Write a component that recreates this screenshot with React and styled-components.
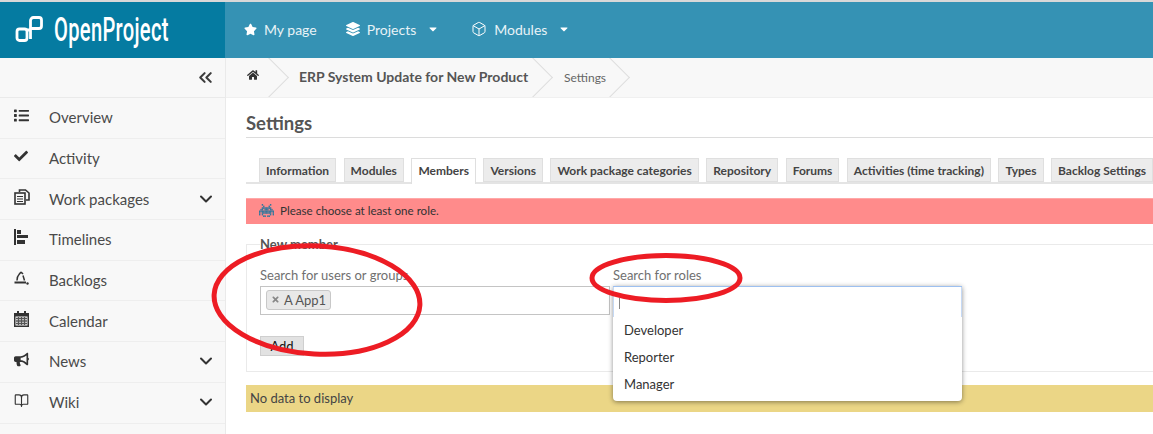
import React from 'react'
import styled, { createGlobalStyle } from 'styled-components'
import { FaStar, FaLayerGroup, FaHome, FaList, FaCheck, FaBullhorn, FaCaretDown, FaTimes } from 'react-icons/fa'
import { ChevronDown, ChevronsLeft, Box, BookOpen } from 'lucide-react'

const GlobalStyle = createGlobalStyle`
  html, body {
    margin: 0;
    height: 100%;
    overflow: hidden;
    background: #fff;
    font-family: Lato, "Noto Sans", sans-serif;
    color: #4a4a4a;
  }
`

const Page = styled.div`
  position: relative;
  width: 1153px;
  height: 434px;
  overflow: hidden;
  padding-top: 2px;
  box-sizing: border-box;
  background: #fff;
  box-shadow: inset 0 2px 0 #d8d8d8;
`
const Header = styled.header`
  display: flex;
  height: 56px;
`
const LogoArea = styled.div`
  width: 225px;
  flex: none;
  background: #057ba1;
  display: flex;
  align-items: center;
  padding: 0 0 2px 15px;
  box-sizing: border-box;
  color: #fff;
  overflow: hidden;
  svg { flex: none; }
`
const LogoText = styled.span`
  font-family: Roboto, sans-serif;
  font-weight: 500;
  font-size: 33px;
  line-height: 1;
  margin-left: 11px;
  flex: none;
  transform: scaleX(0.61);
  transform-origin: left center;
  letter-spacing: 0.5px;
  white-space: nowrap;
`
const Nav = styled.nav`
  flex: 1;
  background: #3592b4;
  display: flex;
  align-items: center;
  padding: 0 0 2px 19px;
  color: #e8f3f7;
  font-size: 14px;
`
const NavItem = styled.div`
  display: flex;
  align-items: center;
  gap: 7px;
  margin-right: ${p => p.$gap}px;
  svg { color: #fff; flex: none; }
`
const Caret = styled(FaCaretDown)`
  margin-left: 4px;
`
const Body = styled.div`
  display: flex;
  height: 376px;
`
const Sidebar = styled.aside`
  width: 226px;
  flex: none;
  background: #f8f8f8;
  border-right: 1px solid #eaeaea;
  box-sizing: border-box;
  overflow: hidden;
`
const Collapse = styled.div`
  height: 40px;
  display: flex;
  align-items: center;
  justify-content: flex-end;
  padding-right: 9px;
  border-bottom: 1px solid #eaeaea;
  box-sizing: border-box;
  color: #3c3c3c;
`
const MenuRow = styled.div`
  height: 40.7px;
  display: flex;
  align-items: center;
  border-bottom: 1px solid #eeeeee;
  box-sizing: border-box;
  padding: 0 9px 1px 14px;
  font-size: 15px;
  color: #4a4a4a;
`
const MenuIcon = styled.span`
  width: 35px;
  flex: none;
  display: flex;
  color: #333;
  margin-top: -4px;
`
const MenuLabel = styled.span`
  flex: 1;
`
const Main = styled.main`
  flex: 1;
  min-width: 0;
`
const Breadcrumb = styled.div`
  height: 40px;
  background: #f8f8f8;
  display: flex;
  align-items: center;
  overflow: hidden;
  border-bottom: 1px solid #f0f0f0;
  box-sizing: border-box;
`
const Crumb = styled.div`
  position: relative;
  height: 100%;
  display: flex;
  align-items: center;
  box-sizing: border-box;
  padding-left: ${p => p.$left}px;
  padding-bottom: ${p => (p.$strong ? 2 : 0)}px;
  width: ${p => p.$width}px;
  flex: none;
  font-size: ${p => (p.$strong ? 14 : 12)}px;
  font-weight: ${p => (p.$strong ? 700 : 400)};
  color: ${p => (p.$strong ? '#555' : '#666')};
  white-space: nowrap;
  &::after {
    content: '';
    position: absolute;
    right: 1px;
    top: 5px;
    width: 28px;
    height: 28px;
    border-top: 1px solid #dedede;
    border-right: 1px solid #dedede;
    transform: rotate(45deg);
  }
`
const HomeIcon = styled(FaHome)`
  margin-top: -5px;
  color: #333;
`
const Content = styled.div`
  padding-left: 20px;
`
const Title = styled.h2`
  margin: 0;
  height: 39px;
  line-height: 50px;
  font-size: 18.5px;
  font-weight: 700;
  color: #555;
  border-bottom: 1px solid #dcdcdc;
`
const Tabs = styled.div`
  display: flex;
  height: 24px;
  margin-top: 20px;
  padding-left: 13px;
  gap: 7.5px;
  border-bottom: 2px solid #e4e4e4;
  white-space: nowrap;
`
const Tab = styled.div`
  height: ${p => (p.$active ? 26 : 24)}px;
  flex: none;
  box-sizing: border-box;
  padding: 0 6px ${p => (p.$active ? 2 : 0)}px;
  display: flex;
  align-items: center;
  font-size: 12px;
  font-weight: 700;
  color: #444;
  background: ${p => (p.$active ? '#fff' : '#ececec')};
  border: 1px solid #dfdfdf;
  border-bottom: ${p => (p.$active ? '0' : '1px solid #dfdfdf')};
`
const Flash = styled.div`
  margin-top: 14px;
  height: 25.5px;
  background: #ff8b8b;
  border-top: 1px solid #ffa8a8;
  box-sizing: border-box;
  display: flex;
  align-items: center;
  padding: 0 0 2px 13px;
  gap: 6px;
  font-size: 11.6px;
  color: #333;
`
const Fieldset = styled.div`
  position: relative;
  margin-top: 20px;
  height: 128px;
  border: 1px solid #eaeaea;
  border-right: 0;
  box-sizing: border-box;
  padding: 22px 0 0 13px;
`
const Legend = styled.div`
  position: absolute;
  top: -8px;
  left: 13px;
  font-size: 13px;
  font-weight: 700;
  line-height: 14px;
  color: #555;
  background: #fff;
`
const FieldRow = styled.div`
  display: flex;
  gap: 3px;
`
const Field = styled.div`
  position: relative;
  width: 350px;
  flex: none;
`
const FieldLabel = styled.label`
  display: block;
  height: 19px;
  font-size: 13px;
  line-height: 16px;
  color: #707070;
`
const TagInput = styled.div`
  height: 29px;
  border: 1px solid #c4c4c4;
  box-sizing: border-box;
  padding: 3px 5px;
  display: flex;
  align-items: flex-start;
`
const Tag = styled.span`
  height: 20px;
  display: inline-flex;
  align-items: center;
  gap: 4px;
  padding: 0 4px;
  background: #e8e8e8;
  border: 1px solid #c8c8c8;
  border-radius: 3px;
  box-sizing: border-box;
  font-size: 13px;
  color: #555;
  svg { color: #888; }
`
const Dropdown = styled.div`
  position: absolute;
  top: 19px;
  left: 0;
  width: 349px;
  height: 115px;
  z-index: 2;
  background: #fff;
  border-radius: 0 0 4px 4px;
  box-shadow: 0 1px 5px rgba(0, 0, 0, 0.45);
  border-top: 1px solid #9dc0f0;
  box-sizing: border-box;
  font-size: 13px;
  color: #333;
`
const SearchLine = styled.div`
  height: 30.5px;
  padding: 11px 0 0 5px;
  box-sizing: border-box;
  border-left: 1px solid #c5d9f5;
  border-right: 1px solid #c5d9f5;
  &::before {
    content: '';
    display: block;
    width: 1px;
    height: 11px;
    background: #888;
  }
`
const Option = styled.div`
  height: 26.8px;
  line-height: 27px;
  padding-left: 11px;
`
const AddButton = styled.button`
  display: block;
  margin-top: 21px;
  width: 44px;
  height: 20px;
  padding: 0;
  background: #e2e2e2;
  border: 1px solid #cfcfcf;
  font-family: Lato, sans-serif;
  font-size: 13px;
  color: #111;
`
const NoData = styled.div`
  margin-top: 13px;
  height: 27.5px;
  background: #ebd686;
  display: flex;
  align-items: center;
  padding-left: 4px;
  font-size: 13px;
  color: #444;
`
const Annotations = styled.svg`
  position: absolute;
  left: 0;
  top: 0;
  z-index: 5;
  pointer-events: none;
`

const LogoMark = () => (
  <svg width="28" height="28" viewBox="0 0 28 28" fill="none" stroke="#fff" strokeWidth="2.8">
    <rect x="2" y="14" width="10" height="11.5" rx="2.5" />
    <path d="M12 15h3.5M15.5 24V5.5a3 3 0 0 1 3-3H24a2.5 2.5 0 0 1 2.5 2.5v6a2.5 2.5 0 0 1-2.5 2.5h-8" />
  </svg>
)
const TimelineIcon = () => (
  <svg width="14" height="16" viewBox="0 0 14 16" fill="#333">
    <rect x="0" y="0" width="2" height="16" />
    <rect x="3" y="1" width="4" height="4" />
    <rect x="3" y="6" width="11" height="3" />
    <rect x="3" y="11" width="8" height="4" />
  </svg>
)
const BacklogIcon = () => (
  <svg width="15" height="14" viewBox="0 0 15 14" fill="none" stroke="#333" strokeWidth="1.5">
    <path d="M0.5 11.5h11.5" strokeWidth="2" />
    <path d="M3 9.5c0-3 .5-4.5 2-6M5 3.5 7 1M7 1l2 2M9 4.500l1.500 5" />
    <circle cx="13.5" cy="12.5" r="1.2" fill="#333" stroke="none" />
  </svg>
)
const PagesIcon = () => (
  <svg width="16" height="16" viewBox="0 0 16 16" fill="none" stroke="#333" strokeWidth="1.6">
    <path d="M5.5 3V1h6l3.500 3v7h-3" />
    <rect x="1" y="4" width="10" height="11" fill="#f8f8f8" />
    <path d="M3 7.500h6M3 10h6M3 12.500h6" strokeWidth="1.200" />
  </svg>
)
const CalendarIcon = () => (
  <svg width="15" height="16" viewBox="0 0 15 16">
    <path d="M3 0h2v2h5V0h2v2h3v14H0V2h3z" fill="#333" />
    <rect x="1.500" y="5.500" width="12" height="9" fill="#f8f8f8" />
    <path d="M2 7.500h11M2 10h11M2 12.500h11M4.500 6v8M7.500 6v8M10.500 6v8" stroke="#555" strokeWidth="1.300" />
  </svg>
)

const invader = [
  '..X.....X..',
  '...X...X...',
  '..XXXXXXX..',
  '.XX.XXX.XX.',
  'XXXXXXXXXXX',
  'X.XXXXXXX.X',
  'X.X.....X.X',
  '...XX.XX...',
]
const BugIcon = () => (
  <svg width="15" height="13" viewBox="0 0 11 8" fill="#33779c" preserveAspectRatio="none">
    {invader.flatMap((row, y) => [...row].map((c, x) => (
      c === 'X' ? <rect key={`${x}-${y}`} x={x} y={y} width="1.02" height="1.02" /> : null
    )))}
  </svg>
)

const menu = [
  { label: 'Overview', icon: <FaList size={15} /> },
  { label: 'Activity', icon: <FaCheck size={14} /> },
  { label: 'Work packages', icon: <PagesIcon />, more: true },
  { label: 'Timelines', icon: <TimelineIcon /> },
  { label: 'Backlogs', icon: <BacklogIcon /> },
  { label: 'Calendar', icon: <CalendarIcon /> },
  { label: 'News', icon: <FaBullhorn size={15} />, more: true },
  { label: 'Wiki', icon: <BookOpen size={15} strokeWidth={1.8} />, more: true },
  { label: '', icon: null },
]
const tabs = ['Information', 'Modules', 'Members', 'Versions', 'Work package categories', 'Repository', 'Forums', 'Activities (time tracking)', 'Types', 'Backlog Settings']

export default function App() {
  return (
    <Page>
      <GlobalStyle />
      <Header>
        <LogoArea>
          <LogoMark />
          <LogoText>OpenProject</LogoText>
        </LogoArea>
        <Nav>
          <NavItem $gap={29}><FaStar size={13} />My page</NavItem>
          <NavItem $gap={32}><FaLayerGroup size={14} />Projects<Caret size={12} /></NavItem>
          <NavItem $gap={0}><Box size={16} strokeWidth={1.5} />Modules<Caret size={12} /></NavItem>
        </Nav>
      </Header>
      <Body>
        <Sidebar>
          <Collapse><ChevronsLeft size={21} strokeWidth={2.4} /></Collapse>
          {menu.map(m => (
            <MenuRow key={m.label}>
              <MenuIcon>{m.icon}</MenuIcon>
              <MenuLabel>{m.label}</MenuLabel>
              {m.more && <ChevronDown size={20} strokeWidth={2.4} color="#333" />}
            </MenuRow>
          ))}
        </Sidebar>
        <Main>
          <Breadcrumb>
            <Crumb $left={21} $width={58}><HomeIcon size={12} /></Crumb>
            <Crumb $strong $left={15} $width={264}>ERP System Update for New Product</Crumb>
            <Crumb $left={16} $width={77}>Settings</Crumb>
          </Breadcrumb>
          <Content>
            <Title>Settings</Title>
            <Tabs>
              {tabs.map(t => <Tab key={t} $active={t === 'Members'}>{t}</Tab>)}
            </Tabs>
            <Flash><BugIcon />Please choose at least one role.</Flash>
            <Fieldset>
              <Legend>New member</Legend>
              <FieldRow>
                <Field>
                  <FieldLabel>Search for users or groups</FieldLabel>
                  <TagInput><Tag><FaTimes size={9} />A App1</Tag></TagInput>
                </Field>
                <Field>
                  <FieldLabel>Search for roles</FieldLabel>
                  <Dropdown>
                    <SearchLine />
                    <Option>Developer</Option>
                    <Option>Reporter</Option>
                    <Option>Manager</Option>
                  </Dropdown>
                </Field>
              </FieldRow>
              <AddButton>Add</AddButton>
            </Fieldset>
            <NoData>No data to display</NoData>
          </Content>
        </Main>
      </Body>
      <Annotations width="1153" height="434" viewBox="0 0 1153 434" fill="none" stroke="#ed1c24" strokeWidth="5">
        <ellipse cx="317" cy="300" rx="103" ry="54" transform="rotate(3 317 300)" />
        <ellipse cx="666" cy="278" rx="74" ry="22.5" />
      </Annotations>
    </Page>
  )
}
